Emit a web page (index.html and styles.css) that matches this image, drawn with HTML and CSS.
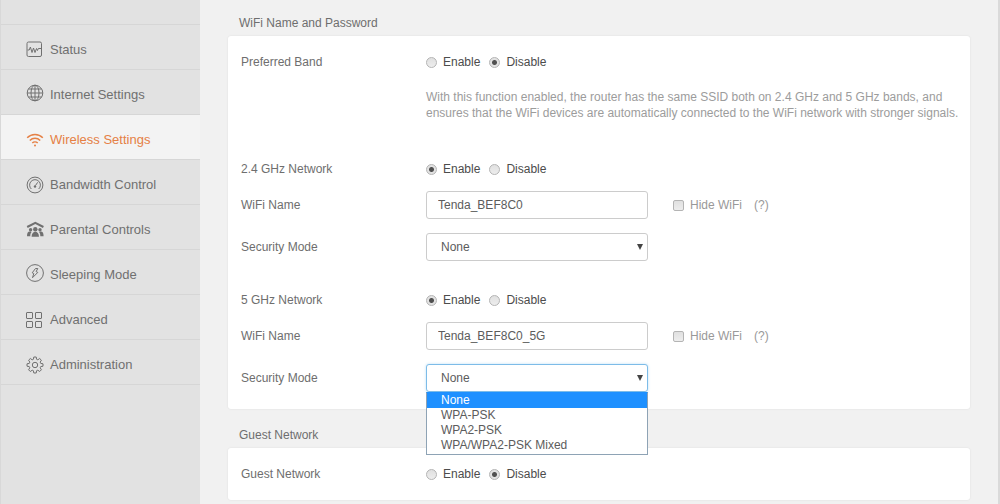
FILE: index.html
```html
<!DOCTYPE html>
<html lang="en">
  <head>
    <meta charset="UTF-8" />
    <meta name="viewport" content="width=device-width, initial-scale=1.0" />
    <title>Wireless Settings</title>
    <link rel="stylesheet" href="styles.css">
  </head>
  <body>
    <div class="layout">
      <nav class="sidebar">
        <ul class="menu">
          <li>
            <a href="#status">
              <svg class="icon" viewBox="0 0 18 18">
                <rect x="1" y="1" width="14.500" height="14.500" rx="1.500" />
                <path d="M1.500 9h1.700l1.200-3L6 11.500l1.500-4.500L9 11.500l1.500-4 1 2 .8-2H15" />
              </svg>
              Status
            </a>
          </li>
          <li>
            <a href="#internet">
              <svg class="icon up" viewBox="0 0 18 18">
                <circle cx="9" cy="9" r="7.800" />
                <ellipse cx="9" cy="9" rx="4" ry="7.800" />
                <path d="M9 1.200v15.600M1.200 9h15.600M2.500 5h13M2.500 13h13" />
              </svg>
              Internet Settings
            </a>
          </li>
          <li class="active">
            <a href="#wireless">
              <svg class="icon wifi" viewBox="0 0 18 18">
                <path d="M1.200 6.700c4.300-4.400 11.300-4.400 15.600 0M3.800 9.500c2.900-2.900 7.500-2.900 10.400 0M6.300 12c1.500-1.500 3.900-1.500 5.400 0" />
                <circle class="fill" cx="9" cy="14.500" r="1" />
              </svg>
              Wireless Settings
            </a>
          </li>
          <li>
            <a href="#bandwidth">
              <svg class="icon" viewBox="0 0 18 18">
                <circle cx="9" cy="9" r="7.900" />
                <path d="M5.300 13A5.400 5.400 0 1 1 12.700 13M9.500 9.500l2.200-3.200" />
                <circle class="fill" cx="9" cy="10.500" r="1.200" />
              </svg>
              Bandwidth Control
            </a>
          </li>
          <li>
            <a href="#parental">
              <svg class="icon" viewBox="0 0 18 18">
                <path class="roof" d="M1.200 6L9.300 1.800 17.400 6" />
                <g class="fill">
                  <circle cx="9.300" cy="8.200" r="2.200" />
                  <circle cx="4.600" cy="8.800" r="1.700" />
                  <circle cx="14" cy="8.800" r="1.700" />
                  <path d="M5.600 15.700c0-6.600 7.400-6.600 7.400 0zM1 15.200c0-4.700 2-5.200 4.600-4.200-1.200 1.200-1.300 2.700-1.300 4.200zM17.600 15.200c0-4.700-2-5.200-4.600-4.200 1.200 1.200 1.300 2.700 1.300 4.200z" />
                </g>
              </svg>
              Parental Controls
            </a>
          </li>
          <li>
            <a href="#sleeping">
              <svg class="icon up" viewBox="0 0 18 18">
                <circle cx="9" cy="9" r="8.400" />
                <path d="M9.500 4.500L6.200 8.800l1.600.7-1.300 4.200 5.300-5.300-1.700-.8 1.700-3.100z" />
              </svg>
              Sleeping Mode
            </a>
          </li>
          <li>
            <a href="#advanced">
              <svg class="icon" viewBox="0 0 18 18">
                <rect x=".5" y="1.500" width="6" height="6" rx=".5" />
                <rect x="9.500" y="1.500" width="6" height="6" rx=".5" />
                <rect x=".5" y="10.500" width="6" height="6" rx=".5" />
                <rect x="9.500" y="10.500" width="6" height="6" rx=".5" />
              </svg>
              Advanced
            </a>
          </li>
          <li>
            <a href="#administration">
              <svg class="icon" viewBox="0 0 18 18">
                <circle cx="9" cy="9" r="2.700" />
                <path d="M7.800 1h2.400l.4 2.300 1.200.5 1.900-1.300 1.700 1.700-1.200 1.900.5 1.300 2.300.4v2.400l-2.300.4-.5 1.200 1.200 2-1.700 1.700-1.900-1.300-1.200.5-.4 2.300H7.800l-.4-2.300-1.200-.5-1.900 1.300-1.700-1.700 1.200-2-.5-1.200L1 10.200V7.800l2.300-.4.5-1.300-1.200-1.900 1.700-1.700 1.900 1.300 1.200-.5z" />
              </svg>
              Administration
            </a>
          </li>
        </ul>
      </nav>

      <main class="content">
        <section class="section">
          <h2>WiFi Name and Password</h2>
          <form class="card">
            <div class="group intro">
              <div class="row" role="radiogroup" aria-labelledby="band-label">
                <span class="label" id="band-label">Preferred Band</span>
                <label class="option"><input type="radio" name="band" />Enable</label>
                <label class="option"><input type="radio" name="band" checked />Disable</label>
              </div>
              <p class="help">With this function enabled, the router has the same SSID both on 2.4 GHz and 5 GHz bands, and ensures that the WiFi devices are automatically connected to the WiFi network with stronger signals.</p>
            </div>

            <!-- 2.4 GHz -->
            <div class="group">
              <div class="row" role="radiogroup" aria-labelledby="net24-label">
                <span class="label" id="net24-label">2.4 GHz Network</span>
                <label class="option"><input type="radio" name="net24" checked />Enable</label>
                <label class="option"><input type="radio" name="net24" />Disable</label>
              </div>
              <div class="row field">
                <label class="label" for="name24">WiFi Name</label>
                <input class="control" id="name24" type="text" value="Tenda_BEF8C0" />
                <label class="option hide"><input type="checkbox" />Hide WiFi</label>
                <span class="tip">(?)</span>
              </div>
              <div class="row field">
                <label class="label" for="mode24">Security Mode</label>
                <div class="select-wrap">
                  <select class="control" id="mode24">
                    <option>None</option>
                    <option>WPA-PSK</option>
                    <option>WPA2-PSK</option>
                    <option>WPA/WPA2-PSK Mixed</option>
                  </select>
                </div>
              </div>
            </div>

            <!-- 5 GHz -->
            <div class="group">
              <div class="row" role="radiogroup" aria-labelledby="net5-label">
                <span class="label" id="net5-label">5 GHz Network</span>
                <label class="option"><input type="radio" name="net5" checked />Enable</label>
                <label class="option"><input type="radio" name="net5" />Disable</label>
              </div>
              <div class="row field">
                <label class="label" for="name5">WiFi Name</label>
                <input class="control" id="name5" type="text" value="Tenda_BEF8C0_5G" />
                <label class="option hide"><input type="checkbox" />Hide WiFi</label>
                <span class="tip">(?)</span>
              </div>
              <div class="row field">
                <label class="label" for="mode5">Security Mode</label>
                <div class="select-wrap open">
                  <select class="control" id="mode5">
                    <option>None</option>
                    <option>WPA-PSK</option>
                    <option>WPA2-PSK</option>
                    <option>WPA/WPA2-PSK Mixed</option>
                  </select>
                  <ul class="dropdown" role="listbox" aria-label="Security Mode">
                    <li role="option" aria-selected="true" class="selected">None</li>
                    <li role="option">WPA-PSK</li>
                    <li role="option">WPA2-PSK</li>
                    <li role="option">WPA/WPA2-PSK Mixed</li>
                  </ul>
                </div>
              </div>
            </div>
          </form>
        </section>

        <section class="section">
          <h2>Guest Network</h2>
          <form class="card">
            <div class="row" role="radiogroup" aria-labelledby="guest-label">
              <span class="label" id="guest-label">Guest Network</span>
              <label class="option"><input type="radio" name="guest" />Enable</label>
              <label class="option"><input type="radio" name="guest" checked />Disable</label>
            </div>
          </form>
        </section>
      </main>
    </div>
  </body>
</html>
```
FILE: styles.css
```css
@charset 'utf-8';
* {
  margin: 0;
  padding: 0;
  box-sizing: border-box;
}

body {
  font-family: "Liberation Sans", Arial, sans-serif;
  font-size: 12px;
  line-height: 16px;
  color: #6e6e6e;
  background: #f1f1f1;
}
ul {
  list-style: none;
}
.layout {
  display: flex;
  min-height: 100vh;
  border-right: 2px solid #dadada;
}

/* sidebar */
.sidebar {
  flex: 0 0 200px;
  padding-top: 24px;
  background: #e2e2e2;
  border-left: 1px solid #d8d8d8;
}
.menu {
  border-top: 1px solid #d6d6d6;
}
.menu li {
  border-bottom: 1px solid #d6d6d6;
}
.menu a {
  display: flex;
  align-items: center;
  gap: 6px;
  height: 44px;
  padding: 6px 0 0 25px;
  font-size: 13px;
  color: #707070;
  text-decoration: none;
}
.menu .active {
  background: #f3f3f3;
}
.menu .active a {
  color: #e58045;
}
.icon {
  width: 18px;
  height: 18px;
  fill: none;
  stroke: currentColor;
  stroke-width: 1;
}
.icon.up {
  margin-bottom: 4px;
}
.icon .fill {
  fill: currentColor;
  stroke: none;
}
.icon .roof {
  stroke-width: 2;
}
.wifi {
  stroke-width: 1.5;
}

/* content */
.content {
  flex: 1;
  min-width: 0;
  padding: 10px 28px 0;
}
.section + .section {
  margin-top: 13px;
}
h2 {
  padding-left: 11px;
  font-size: 12px;
  font-weight: normal;
  line-height: 26px;
}
.card {
  padding: 12px 0 12px 13px;
  background: #fff;
  border-radius: 3px;
  box-shadow: 0 0 2px #ddd;
}
.group {
  margin-bottom: 25px;
}
.group:last-child {
  margin-bottom: 5px;
}
.intro {
  margin-bottom: 34px;
}
.row {
  display: flex;
  align-items: center;
  min-height: 28px;
}
.field {
  margin-top: 14px;
}
.row:first-child + .field {
  margin-top: 8px;
}
.label {
  flex: 0 0 185px;
}
.help {
  margin: 13px 0 0 185px;
  color: #9c9c9c;
}

/* controls */
.option {
  display: flex;
  align-items: center;
  gap: 6px;
  margin-right: 9px;
  color: #4c4c4c;
}
.option input {
  appearance: none;
  width: 11px;
  height: 11px;
  border: 1px solid #b4b4b4;
  background: linear-gradient(#e0e0e0, #ededed);
}
.option input[type="radio"] {
  border-radius: 50%;
}
.option input[type="radio"]:checked {
  background: radial-gradient(circle, #505050 2px, #e2e2e2 3px);
}
.option input[type="checkbox"] {
  border-radius: 2px;
}
.hide {
  margin: 0 12px 0 25px;
}
.hide,
.tip {
  color: #999;
}
.control {
  display: block;
  width: 222px;
  height: 28px;
  padding: 0 11px;
  font: inherit;
  color: #5c5c5c;
  background: #fff;
  border: 1px solid #ccc;
  border-radius: 3px;
  outline: none;
}
select.control {
  appearance: none;
  padding: 0 14px;
}
.select-wrap {
  position: relative;
}
.select-wrap::after {
  content: "";
  position: absolute;
  top: 11px;
  right: 5px;
  border: 3px solid transparent;
  border-top: 6px solid #444;
  border-bottom: 0;
  pointer-events: none;
}
.open .control {
  border-color: #7dbce8;
  box-shadow: 0 0 3px #bfe0f7;
}
.dropdown {
  position: absolute;
  top: 100%;
  left: 0;
  right: 0;
  z-index: 1;
  padding-bottom: 1px;
  line-height: 15px;
  color: #5c5c5c;
  background: #fff;
  border: 1px solid #8ea3b5;
  border-top-color: #1e90ff;
}
.dropdown li {
  padding-left: 14px;
}
.dropdown .selected {
  color: #fff;
  background: #1e90ff;
}
```
